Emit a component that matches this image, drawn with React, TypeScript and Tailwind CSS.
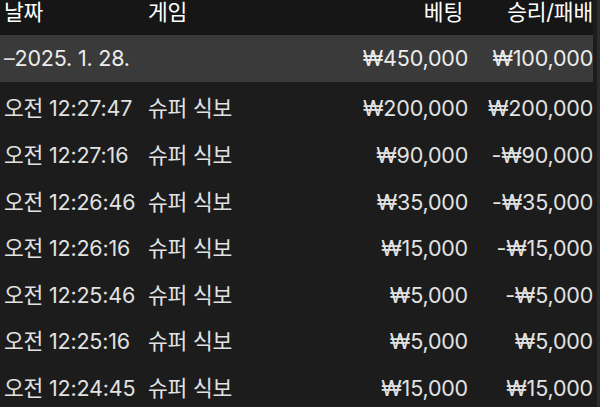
import React from 'react';

type Bet = { time: string; game: string; bet: string; result: string };

const rows: Bet[] = [
  { time: '오전 12:27:47', game: '슈퍼 식보', bet: '₩200,000', result: '₩200,000' },
  { time: '오전 12:27:16', game: '슈퍼 식보', bet: '₩90,000', result: '-₩90,000' },
  { time: '오전 12:26:46', game: '슈퍼 식보', bet: '₩35,000', result: '-₩35,000' },
  { time: '오전 12:26:16', game: '슈퍼 식보', bet: '₩15,000', result: '-₩15,000' },
  { time: '오전 12:25:46', game: '슈퍼 식보', bet: '₩5,000', result: '-₩5,000' },
  { time: '오전 12:25:16', game: '슈퍼 식보', bet: '₩5,000', result: '₩5,000' },
  { time: '오전 12:24:45', game: '슈퍼 식보', bet: '₩15,000', result: '₩15,000' },
];

const font = { fontFamily: 'Inter, "Noto Sans CJK KR", sans-serif' };

export default function App() {
  return (
    <div className="w-[600px] h-[407px] overflow-hidden bg-[#1c1c1c] flex" style={font}>
      <div className="flex-1 flex flex-col text-[21.5px] tracking-[-0.2px]">
        {/* header */}
        <div className="h-[35px] shrink-0 bg-[#161616] flex items-start text-white leading-[24px]">
          <div className="w-[148px] pl-[4px]">날짜</div>
          <div className="flex-1">게임</div>
          <div className="w-[150px] text-right pr-[5px]">베팅</div>
          <div className="w-[125px] text-right">승리/패배</div>
        </div>

        {/* date group */}
        <div className="h-[47px] shrink-0 bg-[#3a3a3a] flex items-center text-[#ececec]">
          <div className="flex-1 pl-[4px]">
            <span className="text-[#d8d8d8]">–</span>2025. 1. 28.
          </div>
          <div className="w-[150px] text-right">₩450,000</div>
          <div className="w-[125px] text-right">₩100,000</div>
        </div>

        <div className="pt-[3px] flex flex-col">
          {rows.map((r, i) => (
            <div key={i} className="h-[46.67px] shrink-0 flex items-center text-[#e2e2e2]">
              <div className="w-[148px] pl-[4px] whitespace-nowrap">{r.time}</div>
              <div className="flex-1 whitespace-nowrap">{r.game}</div>
              <div className="w-[150px] text-right">{r.bet}</div>
              <div className="w-[125px] text-right">{r.result}</div>
            </div>
          ))}
        </div>
      </div>
      {/* right edge strip */}
      <div className="w-[3px] ml-[4px] shrink-0 bg-[#2c2c2c]" />
    </div>
  );
}
